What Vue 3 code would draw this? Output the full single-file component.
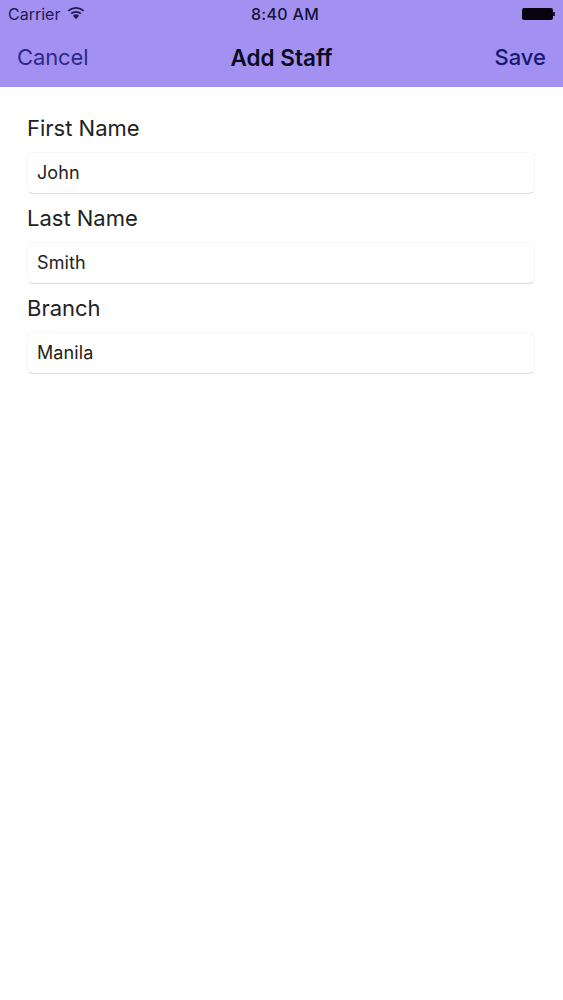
<template>
  <div class="screen">
    <div class="header">
      <div class="status-bar">
        <div class="status-left">
          <span>Carrier</span>
          <svg class="wifi" width="18" height="13" viewBox="0 0 17 12">
            <path d="M8.5 11.5 L5.6 8.2 A4.2 4.2 0 0 1 11.4 8.2 Z" fill="#1d1a52" />
            <path d="M3.9 6.2 A6.8 6.8 0 0 1 13.1 6.2" fill="none" stroke="#1d1a52" stroke-width="1.7" />
            <path d="M1.3 3.6 A10.4 10.4 0 0 1 15.7 3.6" fill="none" stroke="#1d1a52" stroke-width="1.7" />
          </svg>
        </div>
        <div class="status-time">8:40 AM</div>
        <div class="battery">
          <div class="battery-body"></div>
          <div class="battery-tip"></div>
        </div>
      </div>
      <div class="nav-bar">
        <span class="nav-btn cancel">Cancel</span>
        <span class="nav-title">Add Staff</span>
        <span class="nav-btn save">Save</span>
      </div>
    </div>
    <div class="form">
      <div class="field" v-for="f in fields" :key="f.label">
        <div class="label">{{ f.label }}</div>
        <div class="input">{{ f.value }}</div>
      </div>
    </div>
  </div>
</template>

<script setup>
const fields = [
  { label: 'First Name', value: 'John' },
  { label: 'Last Name', value: 'Smith' },
  { label: 'Branch', value: 'Manila' }
]
</script>

<style scoped>
.screen {
  width: 563px;
  height: 1000px;
  background: #fff;
  font-family: Inter, "Liberation Sans", sans-serif;
  overflow: hidden;
}
.header {
  height: 87px;
  background: #a291f0;
  box-sizing: border-box;
}
.status-bar {
  height: 28px;
  display: flex;
  align-items: center;
  padding: 0 8px;
  font-size: 16px;
  color: #1d1a52;
}
.status-left {
  flex: 1;
  display: flex;
  align-items: center;
  gap: 7px;
}
.wifi {
  margin-top: -2px;
}
.status-time {
  color: #14123a;
  font-weight: 500;
  font-size: 16px;
  letter-spacing: 0.3px;
  margin-left: 7px;
}
.battery {
  flex: 1;
  display: flex;
  align-items: center;
  justify-content: flex-end;
}
.battery-body {
  width: 31px;
  height: 12px;
  background: #05040f;
  border-radius: 2px;
}
.battery-tip {
  width: 2px;
  height: 4px;
  background: #1d1a52;
}
.nav-bar {
  height: 59px;
  display: flex;
  align-items: center;
  justify-content: space-between;
  padding: 0 17px 1px 17px;
  box-sizing: border-box;
}
.nav-btn {
  font-size: 22px;
  width: 90px;
  letter-spacing: -0.1px;
}
.cancel {
  color: #2d2a86;
}
.save {
  color: #17196f;
  font-weight: 500;
  letter-spacing: 0;
  text-align: right;
}
.nav-title {
  font-size: 22.5px;
  font-weight: 600;
  color: #0b0a20;
}
.form {
  padding: 27px 28px 0 27px;
  display: flex;
  flex-direction: column;
}
.field {
  height: 90px;
}
.label {
  font-size: 22px;
  line-height: 28px;
  color: #222;
  height: 38px;
}
.input {
  height: 42px;
  box-sizing: border-box;
  padding-left: 9px;
  line-height: 39px;
  font-size: 18px;
  letter-spacing: 0.1px;
  color: #222;
  border: 1px solid #f6f6f6;
  border-bottom: 1px solid #dcdcdc;
  border-radius: 6px;
  background: #fff;
}
</style>
